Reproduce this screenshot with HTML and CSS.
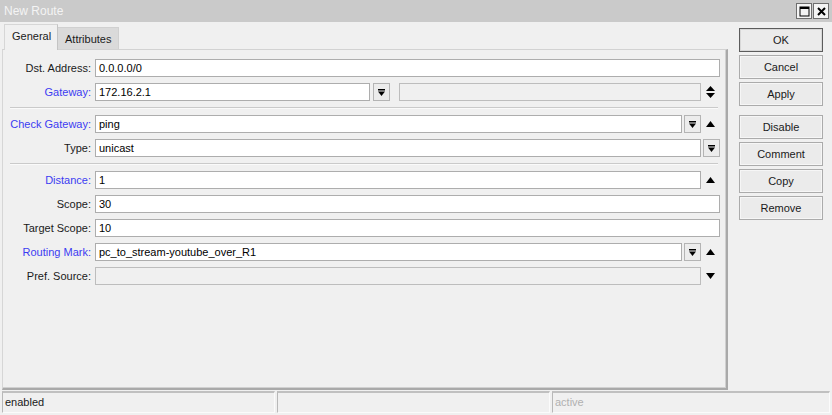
FILE: index.html
```html
<!DOCTYPE html>
<html>
<head>
<meta charset="utf-8">
<link rel="stylesheet" href="styles.css">
</head>
<body>
<div class="window">
  <div class="titlebar">
    <span class="title">New Route</span>
    <div class="winbtns">
      <span class="wb"><svg width="11" height="11" viewBox="0 0 11 11"><rect x="1" y="1" width="9" height="9" fill="none" stroke="#000" stroke-width="1"/><rect x="1" y="1" width="9" height="2" fill="#000"/></svg></span>
      <span class="wb"><svg width="11" height="11" viewBox="0 0 11 11"><path d="M2 2 L9 9 M9 2 L2 9" stroke="#000" stroke-width="2"/></svg></span>
    </div>
  </div>
  <div class="main">
    <div class="left">
      <div class="tabs">
        <div class="tab active">General</div>
        <div class="tab">Attributes</div>
      </div>
      <div class="panel">
        <div class="row">
          <label class="lbl">Dst. Address:</label>
          <div class="field"><div class="input">0.0.0.0/0</div></div>
        </div>
        <div class="row">
          <label class="lbl blue">Gateway:</label>
          <div class="field">
            <div class="input gw">172.16.2.1</div>
            <span class="dd"><svg width="7" height="7" viewBox="0 0 7 7"><rect x="0" y="0" width="7" height="1.5" fill="#000"/><polygon points="0,2.5 7,2.5 3.5,7" fill="#000"/></svg></span>
            <div class="input dis gw2"></div>
            <span class="arr"><svg width="9" height="12" viewBox="0 0 9 12"><polygon points="0,5 9,5 4.5,0" fill="#000"/><polygon points="0,7 9,7 4.5,12" fill="#000"/></svg></span>
          </div>
        </div>
        <div class="sep"></div>
        <div class="row">
          <label class="lbl blue">Check Gateway:</label>
          <div class="field">
            <div class="input">ping</div>
            <span class="dd"><svg width="7" height="7" viewBox="0 0 7 7"><rect x="0" y="0" width="7" height="1.5" fill="#000"/><polygon points="0,2.5 7,2.5 3.5,7" fill="#000"/></svg></span>
            <span class="arr"><svg width="9" height="6" viewBox="0 0 9 6"><polygon points="0,6 9,6 4.5,0" fill="#000"/></svg></span>
          </div>
        </div>
        <div class="row">
          <label class="lbl">Type:</label>
          <div class="field">
            <div class="input">unicast</div>
            <span class="dd"><svg width="7" height="7" viewBox="0 0 7 7"><rect x="0" y="0" width="7" height="1.5" fill="#000"/><polygon points="0,2.5 7,2.5 3.5,7" fill="#000"/></svg></span>
          </div>
        </div>
        <div class="sep"></div>
        <div class="row">
          <label class="lbl blue">Distance:</label>
          <div class="field">
            <div class="input">1</div>
            <span class="arr"><svg width="9" height="6" viewBox="0 0 9 6"><polygon points="0,6 9,6 4.5,0" fill="#000"/></svg></span>
          </div>
        </div>
        <div class="row">
          <label class="lbl">Scope:</label>
          <div class="field"><div class="input">30</div></div>
        </div>
        <div class="row">
          <label class="lbl">Target Scope:</label>
          <div class="field"><div class="input">10</div></div>
        </div>
        <div class="row">
          <label class="lbl blue">Routing Mark:</label>
          <div class="field">
            <div class="input">pc_to_stream-youtube_over_R1</div>
            <span class="dd"><svg width="7" height="7" viewBox="0 0 7 7"><rect x="0" y="0" width="7" height="1.5" fill="#000"/><polygon points="0,2.5 7,2.5 3.5,7" fill="#000"/></svg></span>
            <span class="arr"><svg width="9" height="6" viewBox="0 0 9 6"><polygon points="0,6 9,6 4.5,0" fill="#000"/></svg></span>
          </div>
        </div>
        <div class="row">
          <label class="lbl">Pref. Source:</label>
          <div class="field">
            <div class="input dis"></div>
            <span class="arr"><svg width="9" height="6" viewBox="0 0 9 6"><polygon points="0,0 9,0 4.5,6" fill="#000"/></svg></span>
          </div>
        </div>
      </div>
    </div>
    <div class="side">
      <div class="btn default">OK</div>
      <div class="btn">Cancel</div>
      <div class="btn">Apply</div>
      <div class="btn grp">Disable</div>
      <div class="btn">Comment</div>
      <div class="btn">Copy</div>
      <div class="btn">Remove</div>
    </div>
  </div>
  <div class="status">
    <div class="cell c1">enabled</div>
    <div class="cell c2"></div>
    <div class="cell c3">active</div>
  </div>
</div>
</body>
</html>
```
FILE: styles.css
```css
* { box-sizing: border-box; }
html, body { margin: 0; padding: 0; }
body {
  width: 832px;
  height: 415px;
  background: #f0f0f0;
  font-family: "Liberation Sans", Arial, sans-serif;
  font-size: 11px;
  color: #1a1a1a;
  overflow: hidden;
}
.window { width: 832px; height: 415px; display: flex; flex-direction: column; }

.titlebar {
  height: 22px;
  background: #cacaca;
  display: flex;
  align-items: center;
  justify-content: space-between;
  padding: 0 3px 0 4px;
}
.title { color: #f4f4f4; font-size: 12px; }
.winbtns { display: flex; gap: 1px; }
.wb {
  width: 16px;
  height: 16px;
  border: 1px solid #6e6e6e;
  background: #f4f4f4;
  display: flex;
  align-items: center;
  justify-content: center;
}

.main { height: 368px; display: flex; }
.left { width: 728px; display: flex; flex-direction: column; }
.tabs { height: 27px; display: flex; align-items: flex-start; padding-left: 4px; }
.tab {
  padding: 0 7px;
  display: flex;
  align-items: center;
  color: #1a1a1a;
}
.tab.active {
  margin-top: 2px;
  height: 26px;
  width: 54px;
  background: #f0f0f0;
  border: 1px solid #d6d6d6;
  border-bottom: none;
  border-right: 1px solid #c4c4c4;
  position: relative;
  z-index: 1;
  padding-bottom: 3px;
}
.tab:not(.active) {
  margin-top: 5px;
  height: 22px;
  width: 61px;
  background: #dadada;
  border: 1px solid #d0d0d0;
  border-left: none;
  border-bottom: none;
}

.panel {
  margin-left: 2px;
  width: 726px;
  height: 342px;
  border-top: 1px solid #d2d2d2;
  border-left: 1px solid #d6d6d6;
  border-right: 2px solid #a9a9a9;
  border-bottom: 2px solid #a9a9a9;
  box-shadow: inset -1px -1px 0 #d0d0d0;
  padding-top: 9px;
}
.row { display: flex; height: 18px; align-items: center; margin-bottom: 6px; }
.lbl { width: 88px; text-align: right; white-space: nowrap; }
.lbl.blue { color: #3c3cf2; }
.field { margin-left: 4px; width: 625px; height: 18px; display: flex; align-items: center; }
.input {
  flex: 1;
  height: 18px;
  background: #fff;
  border: 1px solid #adadad;
  padding: 0 3px;
  line-height: 16px;
  color: #000;
  white-space: nowrap;
}
.input.dis { background: #f0f0f0; border-color: #bdbdbd; }
.input.gw { flex: none; width: 275px; }
.input.gw2 { margin-left: 9px; }
.dd {
  width: 17px;
  height: 18px;
  margin-left: 2px;
  background: #ececec;
  border: 1px solid #b4b4b4;
  display: flex;
  align-items: center;
  justify-content: center;
}
.gw + .dd { margin-left: 3px; }
.arr { width: 19px; height: 18px; display: flex; align-items: center; justify-content: center; }
.sep {
  margin: 0 8px 6px 7px;
  height: 2px;
  border-top: 1px solid #cacaca;
  border-bottom: 1px solid #fafafa;
}

.side { margin-left: 11px; padding-top: 6px; width: 84px; display: flex; flex-direction: column; }
.btn {
  height: 24px;
  margin-bottom: 3px;
  background: #ebebeb;
  border: 1px solid #ababab;
  box-shadow: inset 0 0 0 1px #f6f6f6;
  display: flex;
  align-items: center;
  justify-content: center;
  color: #1a1a1a;
  font-size: 11px;
}
.btn.default { border: 1px solid #5c5c5c; box-shadow: inset 0 0 0 1px #d8d8d8; }
.btn.grp { margin-top: 6px; }

.status { height: 25px; display: flex; padding: 1px 2px 2px 2px; gap: 2px; }
.cell {
  height: 22px;
  border-top: 2px solid #c0c0c0;
  border-left: 1px solid #b8b8b8;
  border-right: 1px solid #fbfbfb;
  border-bottom: 1px solid #fbfbfb;
  padding-left: 2px;
  line-height: 19px;
  color: #1a1a1a;
}
.c1 { width: 273px; }
.c2 { width: 273px; }
.c3 { flex: 1; color: #b0b0b0; }
```
